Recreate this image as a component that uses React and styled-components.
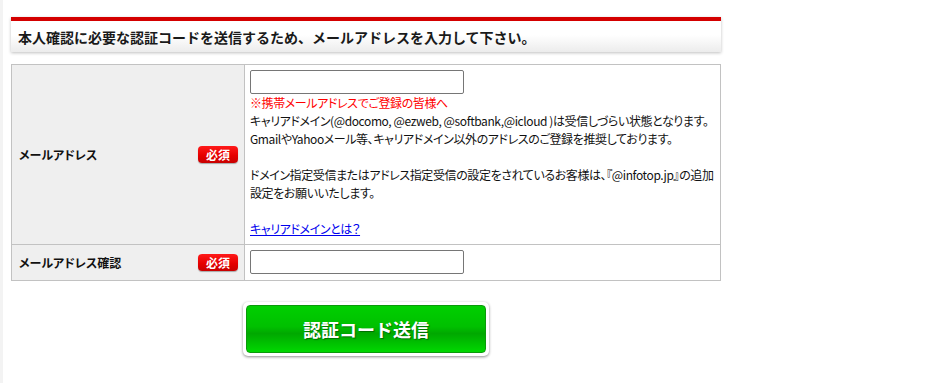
import React from "react";
import styled, { createGlobalStyle } from "styled-components";

const Global = createGlobalStyle`
  html, body { margin: 0; padding: 0; background: #fff; }
  body {
    font-family: "Noto Sans CJK JP", "Noto Sans", sans-serif;
    font-feature-settings: "palt";
    color: #000;
    border-left: 3px solid #f3f3f3;
    min-height: 100vh;
    box-sizing: border-box;
  }
`;

const Page = styled.div`
  width: 710px;
  padding: 17px 0 0 8px;
`;

const Heading = styled.div`
  border-top: 4px solid #d40000;
  height: 31px;
  display: flex;
  align-items: center;
  padding-left: 7px;
  background: linear-gradient(#ffffff 0%, #ffffff 45%, #ececec 100%);
  box-shadow: 0 1px 3px rgba(0, 0, 0, 0.25);
  font-size: 14px;
  font-weight: bold;
  font-feature-settings: normal;
  letter-spacing: 0;
  color: #1a1a1a;
`;

const Table = styled.table`
  margin-top: 12px;
  width: 710px;
  table-layout: fixed;
  border-collapse: collapse;
  border: 1px solid #bdbdbd;
`;

const LabelCol = styled.col`
  width: 233px;
`;

const Label = styled.th`
  background: #efefef;
  border: 1px solid #c2c2c2;
  padding: 0 6px 0 7px;
  text-align: left;
  font-size: 12px;
  font-weight: bold;
  vertical-align: middle;
  color: #111;
`;

const LabelInner = styled.div`
  display: flex;
  align-items: center;
  justify-content: space-between;
`;

const Badge = styled.span`
  width: 40px;
  height: 17px;
  border-radius: 4px;
  background: linear-gradient(#ff1a1a 0%, #e60000 55%, #c80000 100%);
  color: #fff;
  font-size: 12px;
  font-weight: bold;
  display: flex;
  align-items: center;
  justify-content: center;
  box-shadow: 0 1px 1px rgba(0, 0, 0, 0.3);
`;

const Cell = styled.td`
  border: 1px solid #c2c2c2;
  padding: 5px 5px 6px 5px;
  font-size: 12px;
  line-height: 18px;
  letter-spacing: -0.4px;
  vertical-align: top;
  white-space: nowrap;
  overflow: hidden;
`;

const Input = styled.input`
  display: block;
  box-sizing: border-box;
  width: 214px;
  height: 24px;
  margin: 0;
  border: 1px solid #767676;
  border-radius: 2px;
  background: #fff;
`;

const Note = styled.div`
  color: ${(p) => p.$color || "#111"};
  min-height: 18px;
`;

const Link = styled.a`
  color: #0000ee;
  text-decoration: underline;
`;

const ButtonRow = styled.div`
  display: flex;
  justify-content: center;
  margin-top: 21px;
`;

const ButtonFrame = styled.div`
  padding: 3px;
  background: #fff;
  border-radius: 5px;
  box-shadow: 0 1px 3px rgba(0, 0, 0, 0.45);
`;

const Button = styled.button`
  width: 240px;
  height: 48px;
  border: 1px solid #0a9a0a;
  border-radius: 4px;
  background: linear-gradient(#00cf00 0%, #00c000 45%, #00a800 60%, #00d800 100%);
  color: #fff;
  font-family: "Noto Sans CJK JP", sans-serif;
  font-size: 18px;
  font-weight: bold;
  text-shadow: 1px 1px 1px rgba(0, 60, 0, 0.6);
  cursor: pointer;
  padding: 0;
`;

export default function App() {
  return (
    <>
      <Global />
      <Page>
        <Heading>本人確認に必要な認証コードを送信するため、メールアドレスを入力して下さい。</Heading>
        <Table>
          <colgroup>
            <LabelCol />
            <col />
          </colgroup>
          <tbody>
            <tr>
              <Label>
                <LabelInner>
                  <span>メールアドレス</span>
                  <Badge>必須</Badge>
                </LabelInner>
              </Label>
              <Cell>
                <Input type="text" />
                <Note $color="#ff0000">※携帯メールアドレスでご登録の皆様へ</Note>
                <Note>キャリアドメイン(@docomo, @ezweb, @softbank,@icloud )は受信しづらい状態となります。</Note>
                <Note>GmailやYahooメール等、キャリアドメイン以外のアドレスのご登録を推奨しております。</Note>
                <Note />
                <Note>ドメイン指定受信またはアドレス指定受信の設定をされているお客様は、『@infotop.jp』の追加</Note>
                <Note>設定をお願いいたします。</Note>
                <Note />
                <Note>
                  <Link href="#">キャリアドメインとは？</Link>
                </Note>
              </Cell>
            </tr>
            <tr>
              <Label>
                <LabelInner>
                  <span>メールアドレス確認</span>
                  <Badge>必須</Badge>
                </LabelInner>
              </Label>
              <Cell>
                <Input type="text" />
              </Cell>
            </tr>
          </tbody>
        </Table>
        <ButtonRow>
          <ButtonFrame>
            <Button>認証コード送信</Button>
          </ButtonFrame>
        </ButtonRow>
      </Page>
    </>
  );
}
